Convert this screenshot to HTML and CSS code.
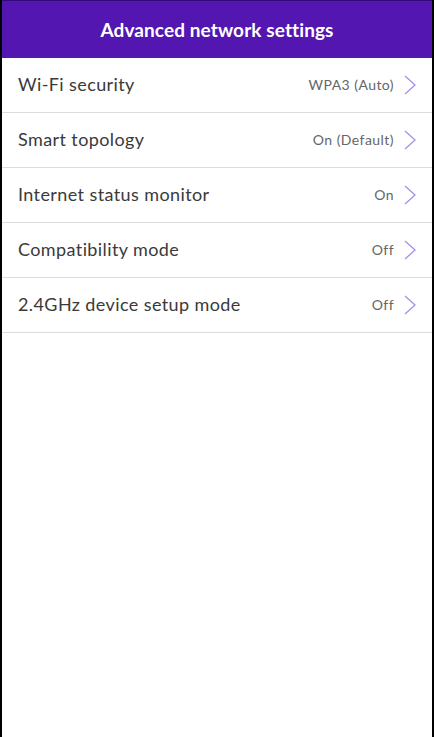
FILE: index.html
```html
<!DOCTYPE html>
<html>
  <head>
    <meta charset="UTF-8" />
    <meta name="viewport" content="width=device-width, initial-scale=1.0" />
    <link rel="stylesheet" href="styles.css">
    <title>Advanced network settings</title>
  </head>

  <body>
    <div class="screen">
      <div class="header">Advanced network settings</div>
      <ul class="settings">
        <li class="row">
          <span class="label">Wi-Fi security</span>
          <span class="value">WPA3 (Auto)</span>
          <svg class="chevron" viewBox="0 0 12 20"><path d="M1 1 L11 10 L1 19" /></svg>
        </li>
        <li class="row">
          <span class="label">Smart topology</span>
          <span class="value">On (Default)</span>
          <svg class="chevron" viewBox="0 0 12 20"><path d="M1 1 L11 10 L1 19" /></svg>
        </li>
        <li class="row">
          <span class="label">Internet status monitor</span>
          <span class="value">On</span>
          <svg class="chevron" viewBox="0 0 12 20"><path d="M1 1 L11 10 L1 19" /></svg>
        </li>
        <li class="row">
          <span class="label">Compatibility mode</span>
          <span class="value">Off</span>
          <svg class="chevron" viewBox="0 0 12 20"><path d="M1 1 L11 10 L1 19" /></svg>
        </li>
        <li class="row">
          <span class="label">2.4GHz device setup mode</span>
          <span class="value">Off</span>
          <svg class="chevron" viewBox="0 0 12 20"><path d="M1 1 L11 10 L1 19" /></svg>
        </li>
      </ul>
    </div>
  </body>
</html>
```

FILE: styles.css
```css
html, body {
  margin: 0;
  height: 100%;
}

body {
  background-color: #000;
  font-family: Lato, "Noto Sans", sans-serif;
}

.screen {
  background-color: #fff;
  margin: 0 2px 0 2px;
  height: 100%;
}

.header {
  background-color: #5316b0;
  border-top: 1px solid #34097a;
  height: 57px;
  display: flex;
  align-items: center;
  justify-content: center;
  color: #fff;
  font-size: 19px;
  font-weight: bold;
  letter-spacing: 0.1px;
}

.settings {
  list-style: none;
  margin: 0;
  padding: 0;
}

.row {
  display: flex;
  align-items: center;
  height: 54px;
  border-bottom: 1px solid #dcdcdc;
  padding: 0 16px;
}

.label {
  flex: 1;
  font-size: 18px;
  letter-spacing: 0.4px;
  color: #3a3a3a;
  margin-bottom: 2px;
}

.value {
  font-size: 14px;
  letter-spacing: 0.45px;
  color: #666;
  margin-right: 10px;
  margin-bottom: 2px;
}

.chevron {
  width: 12px;
  height: 20px;
  fill: none;
  stroke: #a890e4;
  stroke-width: 1.3;
}
```
